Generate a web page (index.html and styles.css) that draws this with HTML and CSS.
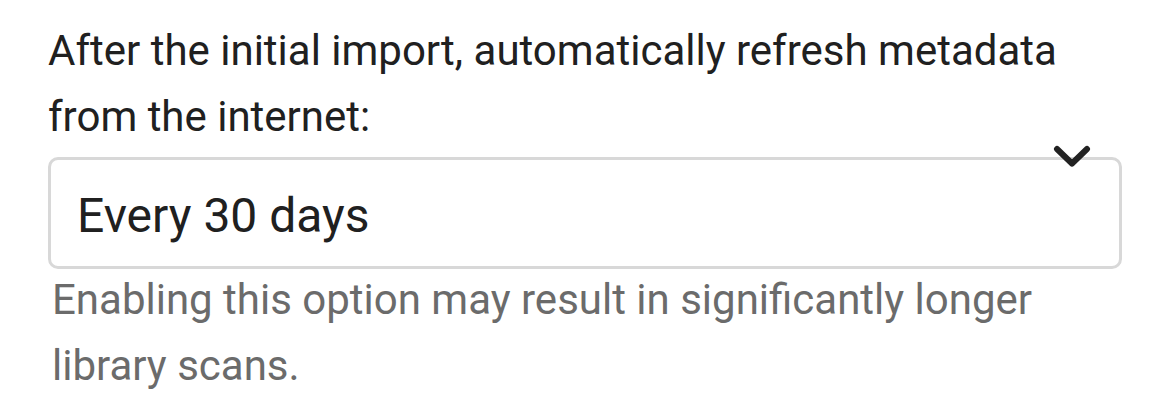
FILE: index.html
```html
<!DOCTYPE html>
<html>
<head>
<meta charset="utf-8">
<link rel="stylesheet" href="styles.css">
</head>
<body>
<div class="field">
  <label class="label">After the initial import, automatically refresh metadata from the internet:</label>
  <div class="select">
    <span class="value">Every 30 days</span>
    <svg class="chevron" width="38" height="26" viewBox="0 0 38 26"><path d="M4 4 L19 18.5 L34 4" fill="none" stroke="#222" stroke-width="6" stroke-linecap="round" stroke-linejoin="round"/></svg>
  </div>
  <div class="help">Enabling this option may result in significantly longer library scans.</div>
</div>
</body>
</html>
```
FILE: styles.css
```css
html, body {
  margin: 0;
  padding: 0;
  background: #ffffff;
}
.field {
  font-family: Roboto, "Liberation Sans", sans-serif;
  padding: 18px 48px 0 48px;
  display: flex;
  flex-direction: column;
}
.label {
  color: #202020;
  display: block;
  font-size: 42px;
  line-height: 66px;
}
.select {
  position: relative;
  margin-top: 7px;
  height: 112px;
  box-sizing: border-box;
  border: 3px solid #d8d8d8;
  border-radius: 10px;
  padding: 23px 0 0 26px;
  color: #202020;
  font-size: 48px;
  line-height: 66px;
}
.chevron {
  position: absolute;
  top: -15px;
  right: 28px;
}
.help {
  color: #6b6b6b;
  font-size: 42px;
  line-height: 66px;
  margin-top: -2px;
  padding-left: 4px;
}
```
